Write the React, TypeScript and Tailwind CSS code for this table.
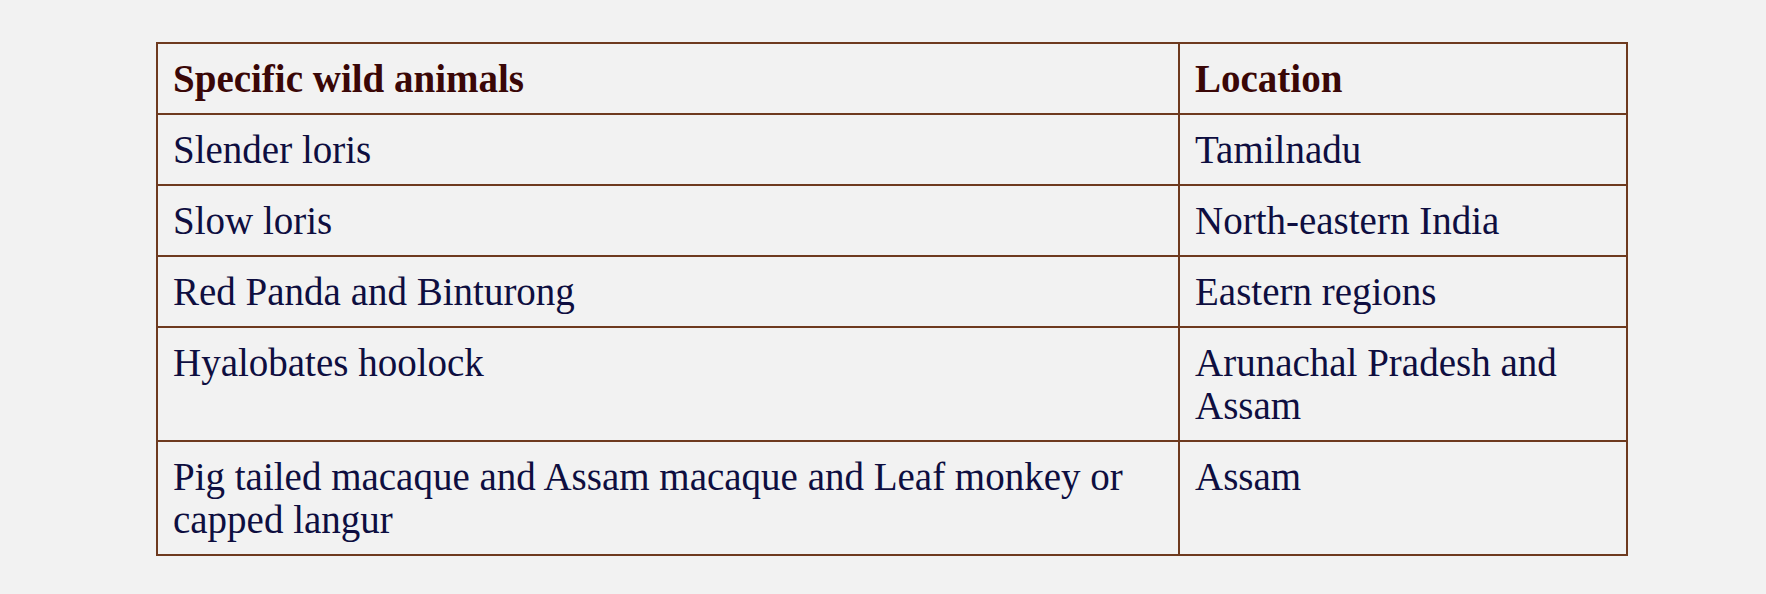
const rows: [string, string][] = [
  ['Slender loris', 'Tamilnadu'],
  ['Slow loris', 'North-eastern India'],
  ['Red Panda and Binturong', 'Eastern regions'],
  ['Hyalobates hoolock', 'Arunachal Pradesh and Assam'],
  ['Pig tailed macaque and Assam macaque and Leaf monkey or capped langur', 'Assam'],
]

export default function App() {
  return (
    <div className="min-h-[594px] w-full bg-[#f2f2f2] pt-[42px] pl-[156px] font-['Liberation_Serif',serif]">
      <table className="w-[1472px] table-fixed border-collapse text-[39px] leading-[43px]">
        <colgroup>
          <col className="w-[1022px]" />
          <col />
        </colgroup>
        <thead>
          <tr>
            <th className="border-2 border-[#6e3a1f] px-[15px] pt-[13px] pb-[13px] text-left align-top font-bold text-[#3a0707]">
              Specific wild animals
            </th>
            <th className="border-2 border-[#6e3a1f] px-[15px] pt-[13px] pb-[13px] text-left align-top font-bold text-[#3a0707]">
              Location
            </th>
          </tr>
        </thead>
        <tbody>
          {rows.map(([animal, place]) => (
            <tr key={animal}>
              <td className="border-2 border-[#6e3a1f] px-[15px] pt-[13px] pb-[13px] align-top text-[#0e0e40]">
                {animal}
              </td>
              <td className="border-2 border-[#6e3a1f] px-[15px] pt-[13px] pb-[13px] align-top text-[#0e0e40]">
                {place}
              </td>
            </tr>
          ))}
        </tbody>
      </table>
    </div>
  )
}
